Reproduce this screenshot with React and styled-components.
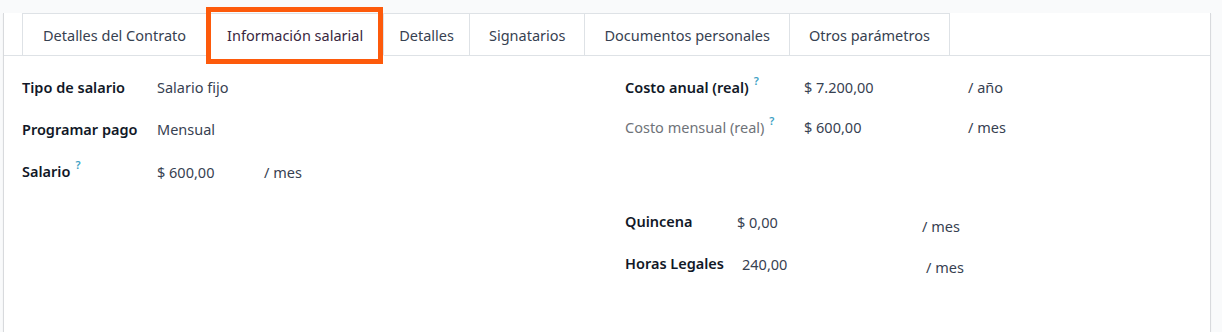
import React from "react";
import styled, { createGlobalStyle } from "styled-components";

const GlobalStyle = createGlobalStyle`
  html, body {
    margin: 0;
    padding: 0;
    background: #f9fafb;
  }
  body {
    font-family: "Noto Sans", "Open Sans", sans-serif;
    font-size: 14px;
  }
`;

const Page = styled.div`
  width: 1222px;
  height: 332px;
  padding-right: 11px;
  box-sizing: border-box;
  background: #f9fafb;
`;

const Sheet = styled.div`
  margin-left: 3px;
  height: 328px;
  box-sizing: border-box;
  background: #fff;
  border: 1px solid #d8dadd;
  border-top: none;
  border-radius: 0 0 4px 4px;
  box-shadow: 0 1px 1px rgba(120, 120, 150, 0.25);
`;

const TabBar = styled.ul`
  display: flex;
  list-style: none;
  margin: 13px 0 0;
  padding: 0 0 0 18px;
  border-bottom: 1px solid #dee2e6;
`;

const Tab = styled.li`
  position: relative;
  height: 43px;
  box-sizing: border-box;
  display: flex;
  align-items: center;
  padding: 0 ${(p) => p.$pad || 19}px;
  margin-bottom: -1px;
  border: 1px solid #dee2e6;
  border-left-width: ${(p) => (p.$first ? "1px" : "0")};
  border-bottom-color: ${(p) => (p.$active ? "#fff" : "#dee2e6")};
  background: #fff;
  color: ${(p) => (p.$active ? "#3a2740" : "#374151")};
  font-size: 14.5px;
  white-space: nowrap;
`;

const Highlight = styled.span`
  position: absolute;
  left: -1px;
  right: 0;
  top: -7px;
  bottom: -9px;
  border: 5px solid #fd5a0b;
  pointer-events: none;
`;

const Body = styled.div`
  display: grid;
  grid-template-columns: 603px 1fr;
  padding: 21px 0 0 18px;
`;

const Group = styled.div`
  display: flex;
  flex-direction: column;
  gap: ${(p) => p.$gap || "22px"};
`;

const Row = styled.div`
  display: flex;
  align-items: flex-start;
  height: ${(p) => p.$h || "20px"};
  line-height: 20px;
`;

const Label = styled.div`
  width: ${(p) => p.$w}px;
  flex: none;
  font-weight: ${(p) => (p.$muted ? 400 : 600)};
  color: ${(p) => (p.$muted ? "#6f7379" : "#111827")};
  font-size: 14.5px;
`;

const Help = styled.sup`
  color: #3d9fc4;
  font-size: 11px;
  font-weight: 600;
  margin-left: 5px;
  vertical-align: 8px;
  line-height: 0;
`;

const Value = styled.div`
  width: ${(p) => (p.$w ? `${p.$w}px` : "auto")};
  flex: none;
  color: #374151;
  font-size: 14.5px;
  margin-top: ${(p) => p.$drop || 0}px;
`;

const Unit = styled.div`
  color: #374151;
  font-size: 14.5px;
  margin-top: ${(p) => p.$drop || 0}px;
`;

const RightGroups = styled.div`
  display: flex;
  flex-direction: column;
  gap: 74px;
`;

const tabs = [
  { label: "Detalles del Contrato", pad: 20 },
  { label: "Información salarial", pad: 20 },
  { label: "Detalles", pad: 15 },
  { label: "Signatarios" },
  { label: "Documentos personales" },
  { label: "Otros parámetros" },
];

export default function App() {
  return (
    <Page>
      <GlobalStyle />
      <Sheet>
        <TabBar>
          {tabs.map((t, i) => (
            <Tab key={t.label} $first={i === 0} $active={i === 1} $pad={t.pad}>
              {t.label}
              {i === 1 && <Highlight />}
            </Tab>
          ))}
        </TabBar>
        <Body>
          <Group>
            <Row>
              <Label $w={135}>Tipo de salario</Label>
              <Value>Salario fijo</Value>
            </Row>
            <Row>
              <Label $w={135}>Programar pago</Label>
              <Value>Mensual</Value>
            </Row>
            <Row>
              <Label $w={135}>
                Salario<Help>?</Help>
              </Label>
              <Value $w={107} $drop={1}>$ 600,00</Value>
              <Unit $drop={1}>/ mes</Unit>
            </Row>
          </Group>
          <RightGroups>
            <Group $gap="20px">
              <Row>
                <Label $w={179}>
                  Costo anual (real)<Help>?</Help>
                </Label>
                <Value $w={164}>$ 7.200,00</Value>
                <Unit>/ año</Unit>
              </Row>
              <Row>
                <Label $w={179} $muted>
                  Costo mensual (real)<Help>?</Help>
                </Label>
                <Value $w={164}>$ 600,00</Value>
                <Unit>/ mes</Unit>
              </Row>
            </Group>
            <Group $gap="17px">
              <Row $h="25px">
                <Label $w={112}>Quincena</Label>
                <Value $w={185} $drop={1}>$ 0,00</Value>
                <Unit $drop={5}>/ mes</Unit>
              </Row>
              <Row $h="25px">
                <Label $w={117}>Horas Legales</Label>
                <Value $w={184} $drop={1}>240,00</Value>
                <Unit $drop={4}>/ mes</Unit>
              </Row>
            </Group>
          </RightGroups>
        </Body>
      </Sheet>
    </Page>
  );
}
